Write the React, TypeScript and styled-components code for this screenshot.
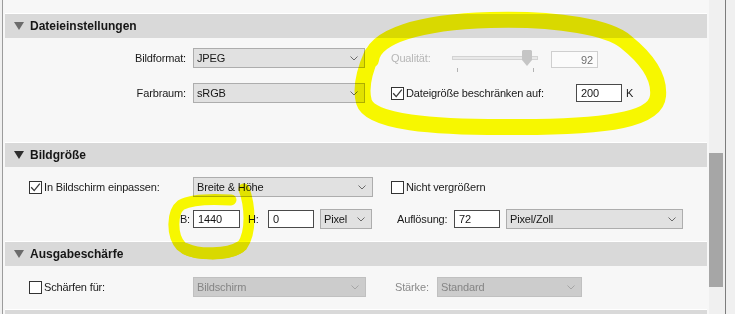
import React from 'react';
import styled, { createGlobalStyle } from 'styled-components';

const GlobalStyle = createGlobalStyle`
  html, body {
    margin: 0;
    padding: 0;
    background: #f0f0f0;
  }
  body {
    font-family: 'Liberation Sans', Arial, sans-serif;
    font-size: 11px;
    letter-spacing: -0.15px;
    color: #1a1a1a;
  }
`;

const Screen = styled.div`
  position: relative;
  width: 735px;
  height: 314px;
  display: flex;
  overflow: hidden;
  background: #f0f0f0;
`;

const Panel = styled.div`
  margin-left: 2px;
  border-left: 1px solid #9c9c9c;
  width: 707px;
  box-sizing: border-box;
  padding: 13px 2px 0;
  background: #f7f7f7;
  display: flex;
  flex-direction: column;
`;

const Section = styled.section`
  border-top: 1px solid #ffffff;
  flex-shrink: 0;
`;

const Header = styled.div`
  height: 24px;
  background: #d9d9d9;
  display: flex;
  align-items: center;
  gap: 6px;
  padding-left: 9px;
  font-size: 12px;
  font-weight: bold;
  letter-spacing: 0;
  color: #161616;
`;

const Body = styled.div<{ $h: number; $pt: number; $gap?: number }>`
  height: ${(p) => p.$h}px;
  box-sizing: border-box;
  padding-top: ${(p) => p.$pt}px;
  display: flex;
  flex-direction: column;
  gap: ${(p) => p.$gap ?? 0}px;
`;

const Row = styled.div<{ $pl?: number }>`
  height: 20px;
  display: flex;
  align-items: center;
  padding-left: ${(p) => p.$pl ?? 0}px;
`;

const Label = styled.span<{ $w: number; $right?: boolean; $dim?: string; $ml?: number }>`
  width: ${(p) => p.$w}px;
  flex-shrink: 0;
  text-align: ${(p) => (p.$right ? 'right' : 'left')};
  margin-left: ${(p) => p.$ml ?? 0}px;
  color: ${(p) => p.$dim ?? '#1a1a1a'};
  white-space: nowrap;
`;

const Gap = styled.span<{ $w: number }>`
  width: ${(p) => p.$w}px;
  flex-shrink: 0;
`;

const SelectBox = styled.div<{ $w: number; $off?: boolean }>`
  width: ${(p) => p.$w}px;
  height: 20px;
  flex-shrink: 0;
  box-sizing: border-box;
  border: 1px solid ${(p) => (p.$off ? '#c0c0c0' : '#adadad')};
  background: ${(p) => (p.$off ? '#cccccc' : '#e1e1e1')};
  color: ${(p) => (p.$off ? '#858585' : '#161616')};
  display: flex;
  align-items: center;
  justify-content: space-between;
  padding: 0 6px 0 3px;
`;

const Field = styled.div<{ $w: number; $h?: number; $right?: boolean; $off?: boolean; $mt?: number }>`
  width: ${(p) => p.$w}px;
  height: ${(p) => p.$h ?? 18}px;
  flex-shrink: 0;
  box-sizing: border-box;
  border: 1px solid ${(p) => (p.$off ? '#cfcfcf' : '#4a4a4a')};
  background: ${(p) => (p.$off ? '#fbfbfb' : '#ffffff')};
  color: ${(p) => (p.$off ? '#6f6f6f' : '#161616')};
  display: flex;
  align-items: center;
  justify-content: ${(p) => (p.$right ? 'flex-end' : 'flex-start')};
  padding: 0 4px;
  align-self: ${(p) => (p.$mt !== undefined ? 'flex-start' : 'center')};
  margin-top: ${(p) => p.$mt ?? 0}px;
`;

const CheckLabel = styled.label<{ $w?: number }>`
  width: ${(p) => (p.$w ? `${p.$w}px` : 'auto')};
  flex-shrink: 0;
  display: flex;
  align-items: center;
  gap: 2px;
  white-space: nowrap;
`;

const Box = styled.span`
  width: 13px;
  height: 13px;
  box-sizing: border-box;
  border: 1px solid #333333;
  background: #ffffff;
  display: flex;
  align-items: center;
  justify-content: center;
  flex-shrink: 0;
`;

const SliderArt = styled.svg`
  align-self: flex-start;
  margin-top: 2px;
  flex-shrink: 0;
`;

const ScrollTrack = styled.div`
  width: 16px;
  height: 314px;
  background: #f0f0f0;
  flex-shrink: 0;
`;

const ScrollThumb = styled.div`
  width: 14px;
  height: 134px;
  margin-top: 153px;
  background: #a6a6a6;
`;

const Rule = styled.div`
  width: 1px;
  height: 314px;
  background: #7c7c7c;
  flex-shrink: 0;
`;

const Marker = styled.svg`
  position: absolute;
  left: 0;
  top: 0;
  pointer-events: none;
  mix-blend-mode: multiply;
`;

const Triangle = ({ dark }: { dark?: boolean }) => (
  <svg width="10" height="8" viewBox="0 0 10 8">
    <polygon points="0,0 10,0 5,8" fill={dark ? '#2e2e2e' : '#6b6b6b'} />
  </svg>
);

const Chevron = ({ off }: { off?: boolean }) => (
  <svg width="8" height="5" viewBox="0 0 8 5">
    <polyline points="0.5,0.5 4,4 7.5,0.5" fill="none" stroke={off ? '#a5a5a5' : '#6a6a6a'} strokeWidth="1" />
  </svg>
);

const Check = ({ on, text, w }: { on?: boolean; text: string; w?: number }) => (
  <CheckLabel $w={w}>
    <Box>
      {on && (
        <svg width="11" height="11" viewBox="0 0 11 11">
          <polyline points="1.2,5.2 4.2,8.6 9.8,1.6" fill="none" stroke="#3a3a3a" strokeWidth="1.3" />
        </svg>
      )}
    </Box>
    {text}
  </CheckLabel>
);

const Select = ({ w, value, off }: { w: number; value: string; off?: boolean }) => (
  <SelectBox $w={w} $off={off}>
    <span>{value}</span>
    <Chevron off={off} />
  </SelectBox>
);

export default function App() {
  return (
    <Screen>
      <GlobalStyle />
      <Panel>
        <Section>
          <Header>
            <Triangle />
            Dateieinstellungen
          </Header>
          <Body $h={104} $pt={10} $gap={15}>
            <Row>
              <Label $w={181} $right>Bildformat:</Label>
              <Gap $w={7} />
              <Select w={172} value="JPEG" />
              <Label $w={61} $ml={26} $dim="#b6b6b6">Qualität:</Label>
              <SliderArt width="86" height="22" viewBox="0 0 86 22">
                <rect x="0.5" y="6.5" width="85" height="3" fill="#e9e9e9" stroke="#d3d3d3" />
                <polygon points="70,1 71,0 79,0 80,1 80,10 75,16 70,10" fill="#c5c5c5" />
                <line x1="5.5" y1="18" x2="5.5" y2="22" stroke="#b3b3b3" />
                <line x1="81.5" y1="18" x2="81.5" y2="22" stroke="#b3b3b3" />
              </SliderArt>
              <Gap $w={13} />
              <Field $w={47} $h={17} $right $off $mt={3}>92</Field>
            </Row>
            <Row>
              <Label $w={181} $right>Farbraum:</Label>
              <Gap $w={7} />
              <Select w={172} value="sRGB" />
              <Gap $w={26} />
              <Check on w={185} text="Dateigröße beschränken auf:" />
              <Field $w={46}>200</Field>
              <Label $w={20} $ml={4}>K</Label>
            </Row>
          </Body>
        </Section>

        <Section>
          <Header>
            <Triangle dark />
            Bildgröße
          </Header>
          <Body $h={74} $pt={10} $gap={12}>
            <Row $pl={24}>
              <Check on w={164} text="In Bildschirm einpassen:" />
              <Select w={180} value="Breite & Höhe" />
              <Gap $w={18} />
              <Check text="Nicht vergrößern" />
            </Row>
            <Row>
              <Label $w={185} $right>B:</Label>
              <Gap $w={3} />
              <Field $w={47}>1440</Field>
              <Label $w={20} $ml={8}>H:</Label>
              <Field $w={46}>0</Field>
              <Gap $w={6} />
              <Select w={52} value="Pixel" />
              <Label $w={57} $ml={25}>Auflösung:</Label>
              <Field $w={46}>72</Field>
              <Gap $w={6} />
              <Select w={177} value="Pixel/Zoll" />
            </Row>
          </Body>
        </Section>

        <Section>
          <Header>
            <Triangle />
            Ausgabeschärfe
          </Header>
          <Body $h={43} $pt={11}>
            <Row $pl={24}>
              <Check w={164} text="Schärfen für:" />
              <Select w={173} value="Bildschirm" off />
              <Label $w={42} $ml={29} $dim="#8a8a8a">Stärke:</Label>
              <Select w={145} value="Standard" off />
            </Row>
          </Body>
        </Section>

        <Section>
          <Header />
        </Section>
      </Panel>
      <ScrollTrack>
        <ScrollThumb />
      </ScrollTrack>
      <Rule />

      <Marker width="735" height="314" viewBox="0 0 735 314">
        <path
          d="M371 60 C374 36 420 22 490 20 C560 18 610 28 626 42 C646 58 660 76 658 96 C656 119 610 127 520 127 C430 128 370 122 364 102 C360 88 364 72 372 54"
          fill="none"
          stroke="#ffff00"
          strokeWidth="16"
          strokeLinecap="round"
          strokeLinejoin="round"
        />
        <path
          d="M244 189 C250 205 252 232 242 246 C230 257 192 256 181 246 C171 235 172 212 181 205 C192 199 215 199 231 200"
          fill="none"
          stroke="#ffff00"
          strokeWidth="11"
          strokeLinecap="round"
          strokeLinejoin="round"
        />
        <path
          d="M186 249 C198 255 228 255 240 247"
          fill="none"
          stroke="#ffff00"
          strokeWidth="12"
          strokeLinecap="round"
        />
      </Marker>
    </Screen>
  );
}
